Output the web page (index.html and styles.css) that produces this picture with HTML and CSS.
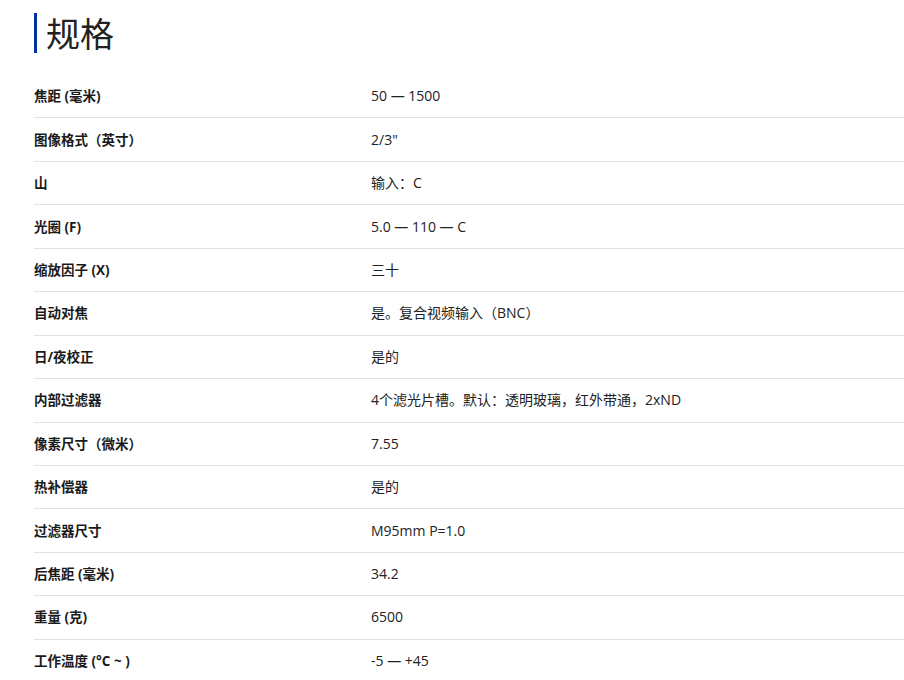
FILE: index.html
```html
<!DOCTYPE html>
<html lang="zh-CN">
<head>
<meta charset="utf-8">
<title>规格</title>
<link rel="stylesheet" href="styles.css">
</head>
<body>
<section class="specs">
  <h2 class="specs-title">规格</h2>
  <div class="spec-table">
    <div class="row"><div class="label">焦距 (毫米)</div><div class="value">50 — 1500</div></div>
    <div class="row"><div class="label">图像格式（英寸）</div><div class="value">2/3"</div></div>
    <div class="row"><div class="label">山</div><div class="value">输入：C</div></div>
    <div class="row"><div class="label">光圈 (F)</div><div class="value">5.0 — 110 — C</div></div>
    <div class="row"><div class="label">缩放因子 (X)</div><div class="value">三十</div></div>
    <div class="row"><div class="label">自动对焦</div><div class="value">是。复合视频输入（BNC）</div></div>
    <div class="row"><div class="label">日/夜校正</div><div class="value">是的</div></div>
    <div class="row"><div class="label">内部过滤器</div><div class="value">4个滤光片槽。默认：透明玻璃，红外带通，2xND</div></div>
    <div class="row"><div class="label">像素尺寸（微米）</div><div class="value">7.55</div></div>
    <div class="row"><div class="label">热补偿器</div><div class="value">是的</div></div>
    <div class="row"><div class="label">过滤器尺寸</div><div class="value">M95mm P=1.0</div></div>
    <div class="row"><div class="label">后焦距 (毫米)</div><div class="value">34.2</div></div>
    <div class="row"><div class="label">重量 (克)</div><div class="value">6500</div></div>
    <div class="row"><div class="label">工作温度 (°C ~ )</div><div class="value">-5 — +45</div></div>
  </div>
</section>
</body>
</html>
```
FILE: styles.css
```css
html, body {
  margin: 0;
  padding: 0;
  background: #fff;
}
body {
  font-family: "Open Sans", "Noto Sans CJK SC", sans-serif;
  color: #222;
}
.specs {
  padding: 13px 0 0 34px;
}
.specs-title {
  margin: 0;
  border-left: 3px solid #0033a0;
  padding-left: 9px;
  height: 40px;
  line-height: 40px;
  font-size: 34px;
  font-weight: 400;
  color: #222;
  font-family: "Noto Sans CJK SC", sans-serif;
}
.spec-table {
  margin-top: 22px;
}
.row {
  display: flex;
  padding: 11.23px 0;
  line-height: 20px;
  border-bottom: 1px solid #e2e2e2;
  font-size: 13.5px;
}
.label {
  width: 337px;
  flex: none;
  font-weight: 700;
  color: #1a1a1a;
}
.value {
  color: #222;
  font-size: 14px;
}
```
